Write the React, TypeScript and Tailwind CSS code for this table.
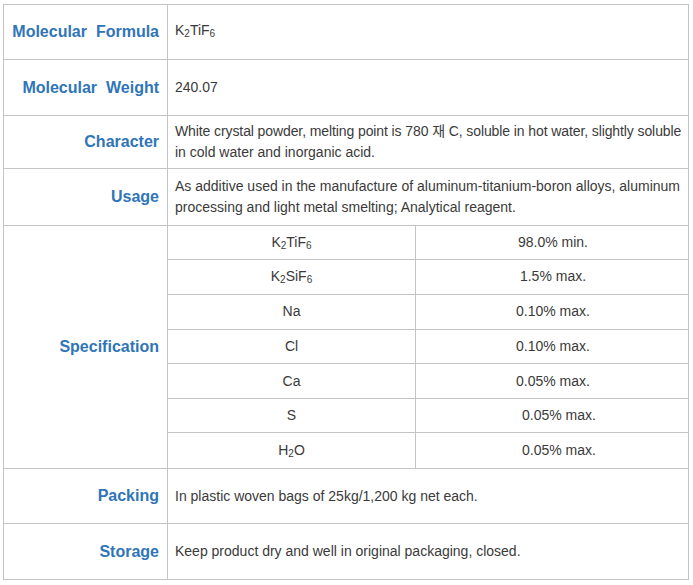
import React from 'react';

const font = { fontFamily: '"Liberation Sans", Arial, "Noto Sans CJK KR", sans-serif' };

const Sub = ({ children }: { children: React.ReactNode }) => (
  <span className="text-[10px] align-[-2px]">{children}</span>
);

const Row = ({
  label,
  h,
  last,
  children,
}: {
  label: string;
  h: string;
  last?: boolean;
  children: React.ReactNode;
}) => (
  <div className={`flex ${h} ${last ? '' : 'border-b border-[#c4c4c4]'}`}>
    <div className="w-[164px] shrink-0 border-r border-[#c4c4c4] flex items-center justify-end pr-[8px]">
      <span className="text-[16px] font-bold text-[#2f75b8] whitespace-pre">{label}</span>
    </div>
    <div className="flex-1 flex items-center pl-[7px] overflow-hidden text-[14px] leading-[21px] text-[#3a3a3a]">
      {children}
    </div>
  </div>
);

const specs: { name: React.ReactNode; value: string; shift?: boolean }[] = [
  { name: <>K<Sub>2</Sub>TiF<Sub>6</Sub></>, value: '98.0% min.' },
  { name: <>K<Sub>2</Sub>SiF<Sub>6</Sub></>, value: '1.5% max.' },
  { name: 'Na', value: '0.10% max.' },
  { name: 'Cl', value: '0.10% max.' },
  { name: 'Ca', value: '0.05% max.' },
  { name: 'S', value: '0.05% max.', shift: true },
  { name: <>H<Sub>2</Sub>O</>, value: '0.05% max.', shift: true },
];

const specHeights = ['h-[34px]', 'h-[35px]', 'h-[35px]', 'h-[35px]', 'h-[35px]', 'h-[34px]', 'h-[35px]'];

export default function App() {
  return (
    <div className="w-[693px] h-[585px] bg-white pt-[4px] pl-[3px]" style={font}>
      <div className="w-[686px] border border-[#c4c4c4]">
        <Row label={'Molecular\u00a0 Formula'} h="h-[55px]">
          <span>
            K<Sub>2</Sub>TiF<Sub>6</Sub>
          </span>
        </Row>
        <Row label={'Molecular\u00a0 Weight'} h="h-[56px]">
          <span>240.07</span>
        </Row>
        <Row label="Character" h="h-[53px]">
          <div className="whitespace-nowrap">
            <span className="tracking-[-0.1px]">
              White crystal powder, melting point is 780 재 C, soluble in hot water, slightly soluble
            </span>
            <br />
            in cold water and inorganic acid.
          </div>
        </Row>
        <Row label="Usage" h="h-[57px]">
          <div className="whitespace-nowrap">
            As additive used in the manufacture of aluminum-titanium-boron alloys, aluminum
            <br />
            processing and light metal smelting; Analytical reagent.
          </div>
        </Row>
        <div className="flex h-[243px] border-b border-[#c4c4c4]">
          <div className="w-[164px] shrink-0 border-r border-[#c4c4c4] flex items-center justify-end pr-[8px]">
            <span className="text-[16px] font-bold text-[#2f75b8]">Specification</span>
          </div>
          <div className="flex-1 flex flex-col text-[14px] text-[#3a3a3a]">
            {specs.map((s, i) => (
              <div
                key={i}
                className={`flex ${specHeights[i]} ${i < specs.length - 1 ? 'border-b border-[#c4c4c4]' : ''}`}
              >
                <div className="w-[248px] shrink-0 border-r border-[#c4c4c4] flex items-center justify-center">
                  <span>{s.name}</span>
                </div>
                <div className={`flex-1 flex items-center justify-center ${s.shift ? 'pl-[14px]' : 'pl-[2px]'}`}>
                  <span>{s.value}</span>
                </div>
              </div>
            ))}
          </div>
        </div>
        <Row label="Packing" h="h-[55px]">
          <span>In plastic woven bags of 25kg/1,200 kg net each.</span>
        </Row>
        <Row label="Storage" h="h-[55px]" last>
          <span>Keep product dry and well in original packaging, closed.</span>
        </Row>
      </div>
    </div>
  );
}
